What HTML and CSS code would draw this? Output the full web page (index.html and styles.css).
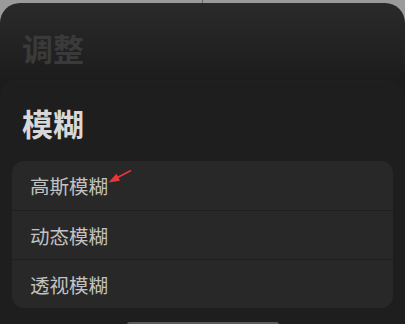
FILE: index.html
```html
<!DOCTYPE html>
<html lang="zh">
<head>
<meta charset="utf-8">
<link rel="stylesheet" href="styles.css">
</head>
<body>
<div class="top-strip"><span class="top-line"></span></div>
<div class="back-sheet">
  <div class="back-header"><h2 class="back-title">调整</h2></div>
  <div class="front-sheet">
    <h1 class="front-title">模糊</h1>
    <div class="card">
      <div class="row">高斯模糊</div>
      <div class="row">动态模糊</div>
      <div class="row">透视模糊</div>
      <svg class="arrow" width="26" height="16" viewBox="0 0 26 16">
        <polygon points="1.5,13.5 13,11.8 9.5,4.8" fill="#e8363a"/>
        <line x1="10.5" y1="8.5" x2="23.5" y2="1.8" stroke="#e8363a" stroke-width="1.6" stroke-linecap="round"/>
      </svg>
    </div>
    <div class="home-indicator"></div>
  </div>
</div>
</body>
</html>
```
FILE: styles.css
```css
html, body {
  margin: 0;
  padding: 0;
  width: 405px;
  height: 324px;
  overflow: hidden;
  background: #9b9b9b;
  font-family: "Noto Sans CJK SC", "Noto Sans", sans-serif;
}
.top-strip {
  height: 3px;
  display: flex;
  justify-content: center;
}
.top-line {
  width: 1px;
  height: 3px;
  background: #666;
}
.back-sheet {
  height: 321px;
  border-radius: 20px 20px 0 0;
  background: linear-gradient(#2a2a2a, #1c1c1c 77px);
  display: flex;
  flex-direction: column;
}
.back-header {
  height: 77px;
  flex: none;
  padding: 27px 0 0 22px;
  box-sizing: border-box;
}
.back-title {
  margin: 0;
  font-size: 31px;
  line-height: 36px;
  font-weight: 700;
  color: #3a3a3a;
}
.front-sheet {
  flex: 1;
  min-height: 0;
  background: #1e1e1e;
  border-radius: 16px 16px 0 0;
  border-top: 1px solid #202020;
  display: flex;
  flex-direction: column;
}
.front-title {
  flex: none;
  margin: 0;
  padding: 24px 0 0 22px;
  font-size: 31px;
  line-height: 36px;
  font-weight: 700;
  color: #d8d8d8;
}
.card {
  flex: none;
  position: relative;
  margin: 20px 12px 0 12px;
  background: #282828;
  border-radius: 12px;
  overflow: hidden;
}
.row {
  box-sizing: border-box;
  height: 49px;
  padding-left: 18px;
  display: flex;
  align-items: center;
  font-size: 19.5px;
  color: #c2c2c2;
  border-top: 1px solid #1f1f1f;
}
.row:first-child {
  border-top: none;
}
.arrow {
  position: absolute;
  left: 95px;
  top: 8px;
}
.home-indicator {
  flex: none;
  align-self: center;
  width: 152px;
  height: 5px;
  margin-top: 14px;
  border-radius: 3px;
  background: #5a5a5a;
}
```
